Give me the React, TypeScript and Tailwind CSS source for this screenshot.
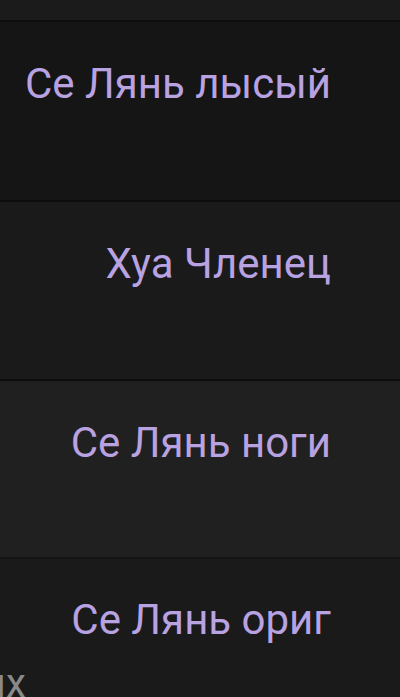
import React from 'react';

const rows = [
  { label: 'Се Лянь лысый', bg: 'bg-[#151515]', h: 'h-[180px]' },
  { label: 'Хуа Членец', bg: 'bg-[#1a1a1a]', h: 'h-[179px]' },
  { label: 'Се Лянь ноги', bg: 'bg-[#202020]', h: 'h-[178px]' },
];

function Row(props: { label: string; bg: string; h: string }) {
  const { label, bg, h } = props;
  return (
    <div className={`${bg} ${h} border-t-2 border-[#0d0d0d] flex justify-end pr-[69px] pt-[34px]`}>
      <span className="text-[42px] leading-[56px] text-[#b8a2e1]">{label}</span>
    </div>
  );
}

export default function App() {
  return (
    <div className="w-[400px] h-[697px] overflow-hidden bg-[#1a1a1a] font-['Roboto',sans-serif]">
      {/* верхняя полоска */}
      <div className="h-[20px] bg-[#1b1b1b]" />
      {rows.map((r) => (
        <Row key={r.label} label={r.label} bg={r.bg} h={r.h} />
      ))}
      <div className="bg-[#1a1a1a] h-[140px] border-t-2 border-[#141414] flex flex-col">
        <div className="flex justify-end pr-[69px] pt-[33px]">
          <span className="text-[42px] leading-[56px] text-[#b8a2e1]">Се Лянь ориг</span>
        </div>
        <div className="mt-auto -ml-[4px] -mb-[7px] text-[40px] leading-[40px] text-[#8a8a8a]">ıx</div>
      </div>
    </div>
  );
}
